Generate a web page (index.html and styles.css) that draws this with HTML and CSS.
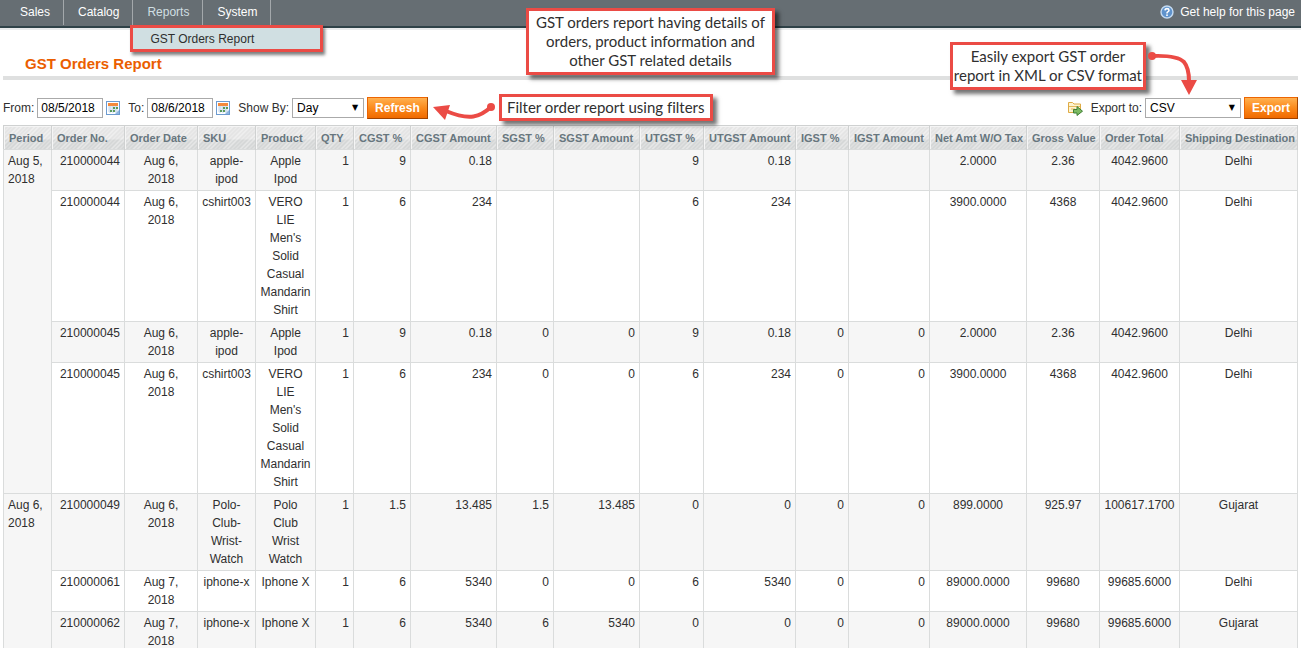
FILE: index.html
```html
<!DOCTYPE html>
<html lang="en">
<head>
    <meta charset="UTF-8">
    <meta name="viewport" content="width=device-width, initial-scale=1.0">
    <title>GST Orders Report</title>
    <link rel="stylesheet" href="styles.css">
</head>
<body>
    <header class="header">
        <nav>
            <ul class="nav">
                <li><a href="#">Sales</a></li>
                <li><a href="#">Catalog</a></li>
                <li class="active">
                    <a href="#">Reports</a>
                    <div class="submenu"><a href="#">GST Orders Report</a></div>
                </li>
                <li><a href="#">System</a></li>
            </ul>
        </nav>
        <a class="help" href="#">
            <svg width="14" height="14" viewBox="0 0 14 14">
                <circle cx="7" cy="7" r="6" fill="#5f93cc" stroke="#c4dbf2" stroke-width="1.4"/>
                <path d="M5 5.4Q5.1 3.6 7 3.6T9 5.3Q9 6.3 7.8 6.9Q7 7.3 7 8.4" fill="none" stroke="#fff" stroke-width="1.6"/>
                <rect x="6.2" y="9.4" width="1.6" height="1.6" fill="#fff"/>
            </svg>
            Get help for this page
        </a>
        <div class="note note-report">GST orders report having details of<br>orders, product information and<br>other GST related details</div>
    </header>

    <main class="container">
        <div class="content-header">
            <h1>GST Orders Report</h1>
        </div>

        <form class="filters">
            <div class="filter-group">
                <label for="from">From:</label>
                <input type="text" id="from" value="08/5/2018">
                <button type="button" class="icon-btn" aria-label="Pick start date">
                    <svg width="14" height="14" viewBox="0 0 14 14">
                        <rect x=".5" y=".5" width="13" height="13" fill="#fff" stroke="#6d9bd0"/>
                        <rect x="2" y="2" width="10" height="3" fill="#f58a3c"/>
                        <path d="M2 6h10M2 8h10M2 10h10M4 5v7M7 5v7M10 5v7" stroke="#c3d6ea"/>
                        <path d="M7 6h2v2H7zM10 6h2v2h-2zM4 9h2v2H4zM7 9h2v2H7z" fill="#5a9a5a"/>
                        <path d="M13 9v4H9z" fill="#8fb5e0"/>
                    </svg>
                </button>
                <label for="to" class="next">To:</label>
                <input type="text" id="to" value="08/6/2018">
                <button type="button" class="icon-btn" aria-label="Pick end date">
                    <svg width="14" height="14" viewBox="0 0 14 14">
                        <rect x=".5" y=".5" width="13" height="13" fill="#fff" stroke="#6d9bd0"/>
                        <rect x="2" y="2" width="10" height="3" fill="#f58a3c"/>
                        <path d="M2 6h10M2 8h10M2 10h10M4 5v7M7 5v7M10 5v7" stroke="#c3d6ea"/>
                        <path d="M7 6h2v2H7zM10 6h2v2h-2zM4 9h2v2H4zM7 9h2v2H7z" fill="#5a9a5a"/>
                        <path d="M13 9v4H9z" fill="#8fb5e0"/>
                    </svg>
                </button>
                <label for="period" class="next">Show By:</label>
                <span class="select">
                    <select id="period">
                        <option>Day</option>
                    </select>
                </span>
                <button type="button" class="btn">Refresh</button>
                <svg class="arrow arrow-filter" width="66" height="26" viewBox="0 0 66 26">
                    <circle cx="59" cy="9" r="4" fill="#eb4b45"/>
                    <path d="M59 9C48 19 38 23 14 13" fill="none" stroke="#eb4b45" stroke-width="4"/>
                    <path d="M1 9L18 7L13 22Z" fill="#eb4b45"/>
                </svg>
                <div class="note note-filter">Filter order report using filters</div>
            </div>

            <div class="filter-group">
                <svg width="16" height="16" viewBox="0 0 16 16">
                    <path d="M1.5 12.5V2.5H5.5L7 4H13.5V12.5Z" fill="#fdf3d0" stroke="#dfab45"/>
                    <path d="M2 6.5H13M4 9H8" stroke="#e3b95c"/>
                    <path d="M6.5 9.500H10V6.500L15.500 11.200L10 15.500V13H6.500Z" fill="#7cba63" stroke="#3f7f35"/>
                </svg>
                <label for="format" class="next">Export to:</label>
                <span class="select select-wide">
                    <select id="format">
                        <option>CSV</option>
                    </select>
                </span>
                <button type="button" class="btn">Export</button>
                <svg class="arrow arrow-export" width="52" height="46" viewBox="0 0 52 46">
                    <circle cx="5" cy="6" r="4" fill="#eb4b45"/>
                    <path d="M5 6Q30 5 37 12Q42 18 42 31" fill="none" stroke="#eb4b45" stroke-width="4"/>
                    <path d="M34 30H50L42 45Z" fill="#eb4b45"/>
                </svg>
                <div class="note note-export">Easily export GST order<br>report in XML or CSV format</div>
            </div>
        </form>

        <table class="grid">
            <colgroup>
                <col class="w-period"><col class="w-order"><col class="w-order"><col class="w-sku"><col class="w-product"><col class="w-qty">
                <col class="w-rate"><col class="w-amount"><col class="w-rate"><col class="w-amount"><col class="w-utrate"><col class="w-utamount">
                <col class="w-irate"><col class="w-iamount"><col class="w-net"><col class="w-order"><col class="w-total"><col>
            </colgroup>
            <thead>
                <tr>
                    <th>Period</th><th>Order No.</th><th>Order Date</th><th>SKU</th><th>Product</th><th>QTY</th>
                    <th>CGST %</th><th>CGST Amount</th><th>SGST %</th><th>SGST Amount</th><th>UTGST %</th><th>UTGST Amount</th>
                    <th>IGST %</th><th>IGST Amount</th><th>Net Amt W/O Tax</th><th>Gross Value</th><th>Order Total</th><th>Shipping Destination</th>
                </tr>
            </thead>
            <tbody>
                <tr>
                    <td class="period" rowspan="4">Aug 5, 2018</td><td class="num">210000044</td><td>Aug 6, 2018</td><td>apple-ipod</td><td>Apple Ipod</td><td class="num">1</td>
                    <td class="num">9</td><td class="num">0.18</td><td></td><td></td><td class="num">9</td><td class="num">0.18</td>
                    <td></td><td></td><td>2.0000</td><td>2.36</td><td>4042.9600</td><td>Delhi</td>
                </tr>
                <tr>
                    <td class="num">210000044</td><td>Aug 6, 2018</td><td>cshirt003</td><td>VERO LIE Men's Solid Casual Mandarin Shirt</td><td class="num">1</td>
                    <td class="num">6</td><td class="num">234</td><td></td><td></td><td class="num">6</td><td class="num">234</td>
                    <td></td><td></td><td>3900.0000</td><td>4368</td><td>4042.9600</td><td>Delhi</td>
                </tr>
                <tr>
                    <td class="num">210000045</td><td>Aug 6, 2018</td><td>apple-ipod</td><td>Apple Ipod</td><td class="num">1</td>
                    <td class="num">9</td><td class="num">0.18</td><td class="num">0</td><td class="num">0</td><td class="num">9</td><td class="num">0.18</td>
                    <td class="num">0</td><td class="num">0</td><td>2.0000</td><td>2.36</td><td>4042.9600</td><td>Delhi</td>
                </tr>
                <tr>
                    <td class="num">210000045</td><td>Aug 6, 2018</td><td>cshirt003</td><td>VERO LIE Men's Solid Casual Mandarin Shirt</td><td class="num">1</td>
                    <td class="num">6</td><td class="num">234</td><td class="num">0</td><td class="num">0</td><td class="num">6</td><td class="num">234</td>
                    <td class="num">0</td><td class="num">0</td><td>3900.0000</td><td>4368</td><td>4042.9600</td><td>Delhi</td>
                </tr>
                <tr>
                    <td class="period" rowspan="3">Aug 6, 2018</td><td class="num">210000049</td><td>Aug 6, 2018</td><td>Polo-Club-Wrist-Watch</td><td>Polo Club Wrist Watch</td><td class="num">1</td>
                    <td class="num">1.5</td><td class="num">13.485</td><td class="num">1.5</td><td class="num">13.485</td><td class="num">0</td><td class="num">0</td>
                    <td class="num">0</td><td class="num">0</td><td>899.0000</td><td>925.97</td><td>100617.1700</td><td>Gujarat</td>
                </tr>
                <tr>
                    <td class="num">210000061</td><td>Aug 7, 2018</td><td>iphone-x</td><td>Iphone X</td><td class="num">1</td>
                    <td class="num">6</td><td class="num">5340</td><td class="num">0</td><td class="num">0</td><td class="num">6</td><td class="num">5340</td>
                    <td class="num">0</td><td class="num">0</td><td>89000.0000</td><td>99680</td><td>99685.6000</td><td>Delhi</td>
                </tr>
                <tr>
                    <td class="num">210000062</td><td>Aug 7, 2018</td><td>iphone-x</td><td>Iphone X</td><td class="num">1</td>
                    <td class="num">6</td><td class="num">5340</td><td class="num">6</td><td class="num">5340</td><td class="num">0</td><td class="num">0</td>
                    <td class="num">0</td><td class="num">0</td><td>89000.0000</td><td>99680</td><td>99685.6000</td><td>Gujarat</td>
                </tr>
            </tbody>
        </table>
    </main>
</body>
</html>
```
FILE: styles.css
```css
* {
    margin: 0;
    padding: 0;
    box-sizing: border-box;
}

body {
    background-color: #fff;
    color: #2f2f2f;
    font-family: "Liberation Sans", Arial, sans-serif;
    font-size: 12px;
    line-height: 18px;
}

a {
    color: inherit;
    text-decoration: none;
}

/* top menu */
.header {
    position: relative;
    display: flex;
    justify-content: space-between;
    background-color: #666e73;
    border-bottom: 2px solid #2f4248;
    box-shadow: 0 2px 0 #e9ebec;
    color: #fff;
}

.nav {
    display: flex;
    list-style: none;
    padding-left: 6px;
}

.nav li {
    position: relative;
    padding: 3px 13px 4px 14px;
    border-right: 1px solid #a3a8ab;
}

.nav li.active {
    color: #d0dfe2;
}

.submenu {
    position: absolute;
    top: 25px;
    left: -3px;
    z-index: 5;
    width: 193px;
    padding: 3px 17px 2px;
    background-color: #d0dfe2;
    border: 3px solid #eb4b45;
    box-shadow: 2px 3px 3px rgba(0, 0, 0, 0.5);
    line-height: 16px;
    color: #2f2f2f;
}

.help {
    display: flex;
    align-items: center;
    gap: 6px;
    padding: 3px 6px 5px;
}

/* callouts */
.note {
    position: absolute;
    z-index: 10;
    background-color: #fff;
    border: 3px solid #eb4b45;
    box-shadow: 4px 4px 4px rgba(0, 0, 0, 0.55);
    color: #2f2f2f;
    font-family: Lato, "Open Sans", sans-serif;
    font-size: 15px;
    font-variant-ligatures: none;
    line-height: 19px;
    text-align: center;
    white-space: nowrap;
}

.note-report {
    top: 8px;
    left: 526px;
    padding: 2px 7px;
}

.note-filter {
    top: -3px;
    left: 496px;
    padding: 1px 5px;
}

.note-export {
    top: -55px;
    right: 152px;
    padding: 2px 1px;
}

.arrow {
    position: absolute;
    z-index: 11;
}

.arrow-filter {
    top: 1px;
    left: 429px;
}

.arrow-export {
    top: -47px;
    right: 99px;
}

/* page */
.container {
    padding: 2px 3px 0;
}

.content-header {
    padding: 24px 22px 2px;
    border-bottom: 4px solid #dfe0e0;
}

.content-header h1 {
    color: #eb5e00;
    font-size: 15px;
    line-height: 20px;
}

.filters {
    display: flex;
    justify-content: space-between;
    padding: 17px 0 6px;
}

.filter-group {
    position: relative;
    display: flex;
    align-items: center;
    gap: 3px;
}

.filter-group .next {
    margin-left: 5px;
}

.filters input,
.filters select {
    width: 66px;
    height: 20px;
    padding: 0 3px;
    background-color: #fff;
    border: 1px solid #aaa;
    color: #000;
    font: inherit;
}

.select {
    position: relative;
    display: flex;
}

.filters select {
    width: 72px;
    padding: 0 4px;
    appearance: none;
    border-radius: 0;
}

.filters .select-wide select {
    width: 96px;
}

.select::after {
    content: "▼";
    position: absolute;
    top: 1px;
    right: 6px;
    color: #000;
    font-family: "DejaVu Sans", sans-serif;
    font-size: 8px;
    pointer-events: none;
}

.icon-btn {
    display: flex;
    background: none;
    border: none;
    cursor: pointer;
}

.btn {
    height: 22px;
    padding: 0 7px;
    background: linear-gradient(#ffb04f, #fb8a1c 50%, #f06a00);
    border: 1px solid;
    border-color: #ed6502 #a04300 #a04300 #ed6502;
    color: #fff;
    font: bold 12px "Liberation Sans", Arial, sans-serif;
    cursor: pointer;
}

/* report table */
.grid {
    width: 100%;
    table-layout: fixed;
    border-collapse: collapse;
    border: 1px solid #cfd1d1;
}

.grid th {
    padding: 3px 0 2px 5px;
    background:
        repeating-linear-gradient(135deg, rgba(255, 255, 255, 0.5) 0 1px, transparent 1px 3px),
        linear-gradient(#e4e4e4 56%, #d4d6d6 56%);
    border-right: 1px solid #cfd1d1;
    box-shadow: inset 1px 1px 0 #f5f5f5;
    color: #67767e;
    font-size: 11px;
    text-align: left;
    white-space: nowrap;
}

.grid td {
    padding: 2px 4px;
    border: 1px solid #dadcdc;
    text-align: center;
    vertical-align: top;
}

.grid tbody tr:nth-child(odd),
.grid .period {
    background-color: #f6f6f6;
}

.grid .period {
    text-align: left;
}

.grid .num {
    text-align: right;
}

.w-period { width: 48px; }
.w-order { width: 73px; }
.w-sku { width: 58px; }
.w-product { width: 60px; }
.w-qty { width: 38px; }
.w-rate { width: 57px; }
.w-amount { width: 86px; }
.w-utrate { width: 64px; }
.w-utamount { width: 92px; }
.w-irate { width: 53px; }
.w-iamount { width: 81px; }
.w-net { width: 97px; }
.w-total { width: 80px; }
```
